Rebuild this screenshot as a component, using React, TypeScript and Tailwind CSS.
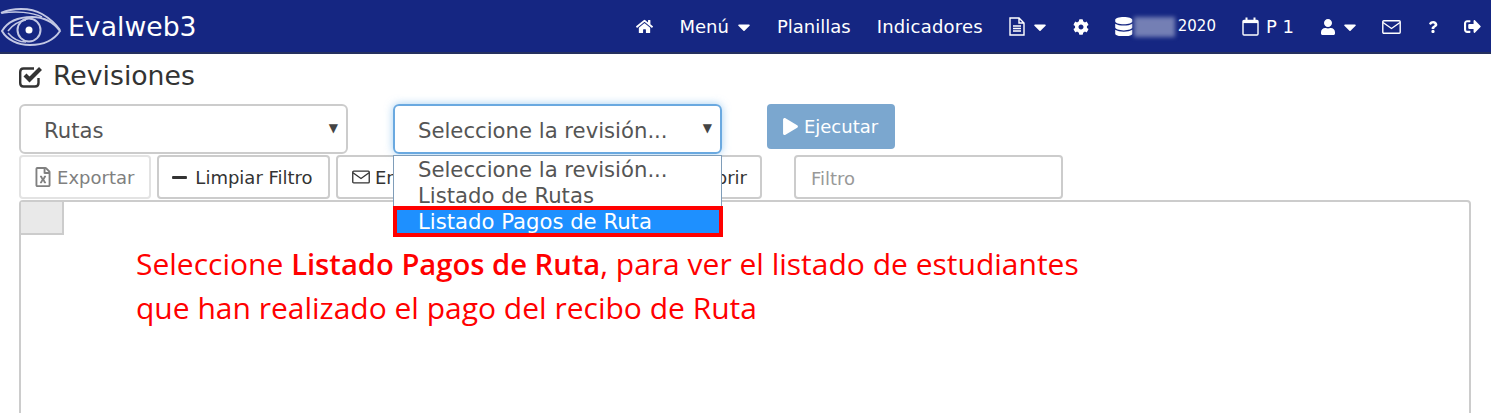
import { FaCaretDown, FaCog, FaDatabase, FaHome, FaMinus, FaPlay, FaQuestion, FaRegFileExcel, FaSignOutAlt, FaUser } from "react-icons/fa";

const font = "font-['DejaVu_Sans','Liberation_Sans',sans-serif]";

function EyeLogo() {
  return (
    <svg width="62" height="44" viewBox="0 0 62 44" fill="none" stroke="#c3c8e4" className="shrink-0">
      <path d="M1 9 C12 4 30 3 42 10 C49 14 55 19 60 26" strokeWidth="2" />
      <path d="M2 9 C16 7 32 8 42 13" strokeWidth="1.5" />
      <path d="M2 27 C8 17 20 13 32 13 C44 13 54 19 60 27 C54 36 43 41 30 41 C18 41 7 36 2 27 Z" strokeWidth="2" />
      <path d="M8 27 C13 20 20 17 26 16 M8 29 C13 35 19 38 26 38" strokeWidth="1.5" />
      <circle cx="29" cy="26" r="11.5" strokeWidth="2" />
      <circle cx="29" cy="26" r="3.5" fill="#ffffff" stroke="none" />
    </svg>
  );
}

function CheckSquare() {
  return (
    <svg width="24" height="23" viewBox="0 0 24 23" fill="none" stroke="#333333" className="shrink-0">
      <path d="M19.5 13 V18 Q19.5 21.5 16 21.5 H4.5 Q1.2 21.5 1.2 18 V7 Q1.2 3.5 4.5 3.5 H15" strokeWidth="2.4" />
      <path d="M6 10 L10.5 14.5 L21.5 3.5" strokeWidth="4.2" />
    </svg>
  );
}

function FileIcon() {
  return (
    <svg width="16" height="19" viewBox="0 0 16 19" fill="none" stroke="currentColor" strokeWidth="1.4" className="shrink-0">
      <path d="M1 1 H10 L15 6 V18 H1 Z M10 1 V6 H15" />
      <path d="M4 9 H12 M4 11.5 H12 M4 14 H12" strokeWidth="1.3" />
    </svg>
  );
}

function CalendarIcon() {
  return (
    <svg width="17" height="19" viewBox="0 0 17 19" fill="none" stroke="currentColor" className="shrink-0">
      <rect x="1" y="3.5" width="15" height="14.5" rx="1" strokeWidth="1.4" />
      <path d="M1 5 H16" strokeWidth="2.2" />
      <path d="M4.5 0.5 V4 M12.5 0.5 V4" strokeWidth="2" />
    </svg>
  );
}

function MailIcon({ width, height }: { width: number; height: number }) {
  return (
    <svg width={width} height={height} viewBox="0 0 19 14" fill="none" stroke="currentColor" strokeWidth="1.4" className="shrink-0">
      <rect x="0.8" y="0.8" width="17.4" height="12.4" rx="1" />
      <path d="M1 2.5 L9.5 8.5 L18 2.5" />
    </svg>
  );
}

function Navbar() {
  return (
    <nav className="flex h-[54px] items-center justify-between border-b-2 border-[#25305f] bg-[#152682] text-white">
      <div className="flex items-center gap-[6px]">
        <EyeLogo />
        <span className="pt-[3px] text-[26.7px] leading-none">Evalweb3</span>
      </div>
      <div className="flex items-center pr-[10px] pt-px text-[18px]">
        <FaHome className="text-[17px]" />
        <span className="ml-[26px]">Menú</span>
        <FaCaretDown className="ml-[5.5px] text-[20px]" />
        <span className="ml-[22.5px]">Planillas</span>
        <span className="ml-[26px] tracking-[0.2px]">Indicadores</span>
        <span className="ml-[26px]"><FileIcon /></span>
        <FaCaretDown className="ml-[5.5px] text-[20px]" />
        <FaCog className="ml-[22.5px] text-[16px]" />
        <FaDatabase className="ml-[24.8px] text-[19.5px]" />
        <span className="ml-[0.7px] h-[20px] w-[41px] bg-[#747fb4] blur-[2px]"></span>
        <span className="ml-[3px] text-[15px]">2020</span>
        <span className="ml-[26px]"><CalendarIcon /></span>
        <span className="ml-[7px]">P 1</span>
        <FaUser className="ml-[26px] text-[16px]" />
        <FaCaretDown className="ml-[3.5px] text-[20px]" />
        <span className="ml-[22.5px]"><MailIcon width={19} height={14} /></span>
        <FaQuestion className="ml-[25.5px] text-[12px]" />
        <FaSignOutAlt className="ml-[25.5px] text-[17px]" />
      </div>
    </nav>
  );
}

function SelectBox({ label, focused, children }: { label: string; focused?: boolean; children?: React.ReactNode }) {
  return (
    <div className="relative w-[329px]">
      <div
        className={
          focused
            ? "flex h-[50px] items-center justify-between rounded-[6px] border-2 border-[#6aa9e0] pl-[23px] pr-[8px] text-[21.2px] text-[#555555] shadow-[0_0_8px_rgba(102,175,233,0.6)]"
            : "flex h-[50px] items-center justify-between rounded-[6px] border-2 border-[#cccccc] pl-[23px] pr-[8px] text-[21.2px] text-[#555555]"
        }
      >
        <span className="pt-[4px]">{label}</span>
        <span className="mb-[3px] text-[12px] text-[#444444]">▼</span>
      </div>
      {children}
    </div>
  );
}

function ToolButton({ children, width, muted }: { children: React.ReactNode; width: string; muted?: boolean }) {
  return (
    <div
      className={
        muted
          ? `flex h-[44px] items-center justify-center rounded-[4px] border-2 border-[#e3e3e3] text-[18px] text-[#808080] ${width}`
          : `flex h-[44px] items-center justify-center rounded-[4px] border-2 border-[#cccccc] text-[18px] text-[#333333] ${width}`
      }
    >
      {children}
    </div>
  );
}

export default function App() {
  return (
    <div className={`${font} h-[413px] overflow-hidden bg-white`}>
      <Navbar />
      <main className="pl-[19px] pr-[20px]">
        <h1 className="flex h-[50px] items-center gap-[10px] pb-[6px] text-[26.7px] text-[#333333]">
          <CheckSquare />
          <span>Revisiones</span>
        </h1>
        <div className="flex items-start">
          <SelectBox label="Rutas" />
          <div className="ml-[45px]">
            <SelectBox label="Seleccione la revisión..." focused>
              <div className="absolute left-0 top-[51px] z-10 w-[330px] text-[21.2px] leading-[26px] text-[#555555]">
                <div className="h-[51px] w-[329px] border border-b-0 border-[#7f9db9] bg-white pl-[24px] pt-px">
                  <div>Seleccione la revisión...</div>
                  <div>Listado de Rutas</div>
                </div>
                <div className="h-[31px] border-[4px] border-[#ff0000] bg-[#1e90ff] pl-[21px] leading-[23px] text-white">Listado Pagos de Ruta</div>
              </div>
            </SelectBox>
          </div>
          <div className="ml-[45px] flex h-[45px] w-[128px] items-center justify-center gap-[5px] rounded-[4px] bg-[#7ba7cf] pr-[2px] text-[18px] text-white">
            <FaPlay className="text-[17px]" />
            <span>Ejecutar</span>
          </div>
        </div>
        <div className="mt-px flex items-start">
          <ToolButton width="w-[132px] pr-[3px]" muted>
            <FaRegFileExcel className="mr-[4.5px] text-[20px]" />
            <span>Exportar</span>
          </ToolButton>
          <div className="ml-[6px]">
            <ToolButton width="w-[173px] pr-[3px]">
              <FaMinus className="mr-[7px] text-[17px]" />
              <span>Limpiar Filtro</span>
            </ToolButton>
          </div>
          <div className="ml-[6px]">
            <ToolButton width="w-[426px]">
              <span className="flex w-full items-center justify-between pl-[14px] pr-[13px]">
                <span className="flex items-center gap-[5px]"><MailIcon width={18} height={14} /><span>Enviar</span></span>
                <span>Abrir</span>
              </span>
            </ToolButton>
          </div>
          <div className="ml-[32px] flex h-[44px] w-[269px] items-center rounded-[4px] border-2 border-[#cccccc] pl-[15px] pt-[2px] text-[18px] text-[#999999]">Filtro</div>
        </div>
        <section className="mt-px h-[300px] rounded-t-[4px] border-2 border-[#cccccc]">
          <div className="h-[33px] w-[43px] border-b-2 border-r-2 border-[#cccccc] bg-[#e9e9e9]"></div>
          <p className="ml-[115px] mt-[7px] font-['Open_Sans',sans-serif] text-[30px] leading-[43px] text-[#ff0000]">
            Seleccione <strong className="text-[29.2px] font-semibold">Listado Pagos de Ruta</strong>, para ver el listado de estudiantes
            <br />
            que han realizado el pago del recibo de Ruta
          </p>
        </section>
      </main>
    </div>
  );
}
